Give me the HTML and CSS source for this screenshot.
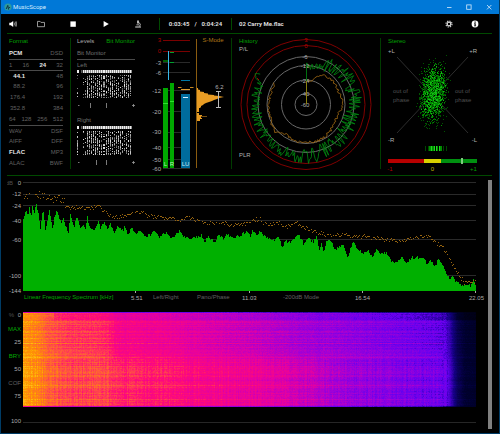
FILE: index.html
```html
<!DOCTYPE html>
<html lang="en">
<head>
<meta charset="utf-8">
<title>MusicScope</title>
<meta name="viewport" content="width=device-width, initial-scale=1">
<link rel="stylesheet" href="styles.css">
</head>
<body>
<header class="titlebar">
  <svg class="logo" viewBox="0 0 8 8" aria-hidden="true"><circle cx="4" cy="4" r="3.6" fill="#2f9a9c"/><path d="M2.2 6l1.6-3.6M3.8 2.4l.8 4.2M5 5.2l1-1.2" stroke="#0c2d3c" stroke-width=".9" fill="none"/></svg>
  <h1 class="app-name">MusicScope</h1>
  <div class="window-buttons">
    <button type="button" aria-label="Minimize"><svg viewBox="0 0 6 6"><path d="M1 3.5h4.5"/></svg></button>
    <button type="button" aria-label="Maximize"><svg viewBox="0 0 6 6"><rect x=".7" y=".9" width="4.4" height="4.4"/></svg></button>
    <button type="button" aria-label="Close"><svg viewBox="0 0 6 6"><path d="M1 1l4.4 4.4M5.4 1L1 5.4"/></svg></button>
  </div>
</header>

<main class="content">
  <div class="toolbar">
    <div class="transport">
      <button type="button" aria-label="Volume"><svg viewBox="0 0 8 8"><path d="M.3 2.8h1.6L4.2 1v6L1.9 5.2H.3z" fill="#fff"/><path d="M5.1 2.6q.9 1.4 0 2.8M6.1 1.8q1.7 2.2 0 4.4M7 1.2q1.6 2.8 0 5.6" stroke="#ccc" stroke-width=".6" fill="none"/></svg></button>
      <button type="button" aria-label="Open"><svg viewBox="0 0 8 8"><path d="M.5 6.7V1.4h2.6l.8 1h3.6v4.3z" stroke="#bbb" stroke-width=".8" fill="none"/></svg></button>
      <button type="button" aria-label="Stop"><svg viewBox="0 0 8 8"><path d="M1.4 1.4h5.4v5.4H1.4z" fill="#fff"/></svg></button>
      <button type="button" aria-label="Play"><svg viewBox="0 0 8 8"><path d="M1.6 1l5.2 3-5.2 3z" fill="#fff"/></svg></button>
      <button type="button" aria-label="Analyze"><svg viewBox="0 0 8 8"><path d="M3.2.6h1.6v3H3.2zM1.2 6.4h5.8v1H1.2zM2.4 4.4h2.8v.8H2.4z" fill="#ddd"/><path d="M5 2.4q2.4 2 .6 4" stroke="#ddd" stroke-width=".8" fill="none"/></svg></button>
    </div>
    <div class="time"><span>0:03:45</span><span>/</span><span>0:04:24</span></div>
    <div class="track">02 Carry Me.flac</div>
    <div class="tools">
      <button type="button" aria-label="Settings"><svg viewBox="0 0 8 8"><circle cx="4" cy="4" r="3" fill="none" stroke="#ccc" stroke-width="1.2" stroke-dasharray="1.3 1.056"/><circle cx="4" cy="4" r="1.8" fill="none" stroke="#ddd" stroke-width="1.2"/></svg></button>
      <button type="button" aria-label="Information"><svg viewBox="0 0 8 8"><circle cx="4" cy="4" r="3.4" fill="#fff"/><path d="M3.5 1.6h1.2v1.1H3.5zM3 3.2h1.7v2.5h.5v.6H3v-.6h.5V3.8H3z" fill="#000"/></svg></button>
    </div>
  </div>

  <div class="panels">
    <section class="panel format">
      <h2>Format</h2>
      <div class="row two"><b>PCM</b><span>DSD</span></div>
      <div class="row ruled four"><span>1</span><span>16</span><b>24</b><span>32</span></div>
      <div class="row ruled two in"><b>44.1</b><span>48</span></div>
      <div class="row two in"><span>88.2</span><span>96</span></div>
      <div class="row two in"><span>176.4</span><span>192</span></div>
      <div class="row two in"><span>352.8</span><span>384</span></div>
      <div class="row four"><span>64</span><span>128</span><span>256</span><span>512</span></div>
      <div class="row ruled two"><span>WAV</span><span>DSF</span></div>
      <div class="row two"><span>AIFF</span><span>DFF</span></div>
      <div class="row two"><b>FLAC</b><span>MP3</span></div>
      <div class="row two"><span>ALAC</span><span>BWF</span></div>
    </section>

    <section class="panel levels">
      <div class="tabs"><button type="button">Levels</button><button type="button" class="on">Bit Monitor</button></div>
      <div class="row">Bit Monitor</div>
      <div class="row ruled">Left</div>
      <canvas class="bits" width="54" height="29" data-seed="3"></canvas>
      <svg class="marks" viewBox="0 0 58 12"><path d="M1 6.5h1.5M13.5 4v5M29.5 4v5M55 6.5h3M56.5 5v3"/></svg>
      <div class="row second">Right</div>
      <canvas class="bits" width="54" height="29" data-seed="8"></canvas>
      <svg class="marks" viewBox="0 0 58 12"><path d="M1 6.5h1.5M19.5 4v5M29.5 4v5M55 6.5h3M56.5 5v3"/></svg>
    </section>

    <section class="panel meters">
      <svg viewBox="0 0 85 141" role="img" aria-label="Level meters">
        <path class="grid" d="M16 28.5h27M16 38.5h27M16 56.5h27M16 77.5h27M16 98.5h27M16 113.5h27M16 125.5h27M16 134.5h27"/>
        <path d="M16 6.5h27M16 17.5h27" stroke="#7a0000"/>
        <g class="scale end"><text x="14" y="8" class="red">3</text><text x="14" y="19" class="red">0</text><text x="14" y="31">-3</text><text x="14" y="41">-6</text><text x="14" y="59">-12</text><text x="14" y="80">-20</text><text x="14" y="100">-30</text><text x="14" y="116">-40</text><text x="14" y="128">-50</text><text x="14" y="137">-60</text></g>
        <path d="M16 54h5v80h-5zM23 49h4v85h-4z" fill="#00a800"/>
        <path d="M16 69.500h5M23 67.500h4" stroke="#30e030"/>
        <path d="M16 27h5" stroke="#006000" stroke-width="2"/>
        <path d="M23 18.500h4M23 28.500h4" stroke="#00a030"/>
        <path d="M21.500 17v29" stroke="#38b8e8"/>
        <path d="M34 60h9v74h-9z" fill="#006c9c"/>
        <path d="M36 63.500h5" stroke="#d8f0ff"/>
        <path d="M34 46.500h9" stroke="#0078a8"/>
        <path d="M31 53.500h3.500M43 53.500h3.500" stroke="#c88820"/><path d="M34 55.500h9" stroke="#e0a030"/>
        <g class="scale mid"><text x="18.500" y="132" fill="#bde8bd">L</text><text x="25" y="132" fill="#bde8bd">R</text><text x="38.500" y="132" fill="#cfe6f2">LU</text></g>
        <path d="M49.500 5v129" stroke="#8a5c10"/>
        <path d="M50 52v2h1v1.500l2 .5v1.500l4 .5v1l4 .5v1l6 .5v.5l5 .5 5 1-5 1-2 1-3 1-2 1-3 1-3 1-2 1-1 1-2 1v1l-1 1h-1v4h-2zM50 79h2v2h3v1h5v.5h-6v1.500h1v1h-2v2h-3z" fill="#e89c24"/>
        <g class="scale mid"><text x="66" y="8" class="amber">S-Mode</text><text x="72.500" y="55">6.2</text></g>
        <path d="M69 57.500h5M71.500 57v16M69 73.500h5" stroke="#bbb" fill="none"/>
      </svg>
    </section>

    <section class="panel history">
      <svg viewBox="0 0 149 141" role="img" aria-label="History">
        <g fill="none"><g stroke="#800000"><circle cx="74" cy="70.500" r="65"/><circle cx="74" cy="70.500" r="59"/></g>
        <g stroke="#686868"><circle cx="74" cy="70.500" r="48"/><circle cx="74" cy="70.500" r="39"/><circle cx="74" cy="70.500" r="24.500"/><circle cx="74" cy="70.500" r="11"/></g>
        <path id="histOrange" stroke="#a86e14" stroke-width=".8"/><path id="histGreen" stroke="#008c10" stroke-width=".8"/><path stroke="#a00000" d="M25 44l2 2"/></g>
        <g class="scale mid"><text x="74" y="8" class="red">3</text><text x="74" y="14" class="red">0</text><text x="73" y="25">-6</text><text x="73" y="34">-12</text><text x="73" y="49">-24</text><text x="73" y="62">-40</text><text x="73" y="73">-60</text></g>
        <path d="M74.500 31v30" stroke="#007010"/><path d="M74.500 47v23" stroke="#8a8010"/>
        <g class="scale"><text x="7" y="9" class="green">History</text><text x="7" y="17">P/L</text><text x="7" y="123">PLR</text></g>
      </svg>
    </section>

    <section class="panel stereo">
      <svg viewBox="0 0 111 141" role="img" aria-label="Stereo">
        <path d="M16 23l71 76M87 23l-71 76" stroke="#383838" stroke-width=".8"/>
        <path id="cloudDim" fill="#005400"/><path id="cloudMid" fill="#008c00"/><path id="cloudLit" fill="#14bc14"/>
        <g class="scale"><text x="7" y="9" class="green">Stereo</text><text x="7" y="19">+L</text><text x="7" y="108">-R</text><g class="dim"><text x="12" y="59">out of</text><text x="12" y="68">phase</text><text x="74" y="59">out of</text><text x="74" y="68">phase</text></g></g>
        <g class="scale end"><text x="96" y="19">+R</text><text x="96" y="108">-L</text></g>
        <path d="M44.500 112v5M47.500 112v5M62.500 112v5M65.500 112v5" stroke="#004800"/>
        <path d="M49 112v5M52 112v5M56 112v5M60 112v5" stroke="#008c00" stroke-width="2"/><path d="M50.500 112v5M53.500 112v5M55.500 112v5M58.500 112v5" stroke="#20d820"/>
        <path d="M7 125h36v4H7z" fill="#b80000"/><path d="M43 125h17v4H43z" fill="#d8d000"/><path d="M60 125h36v4H60z" fill="#009010"/><path d="M80 124h2v6h-2z" fill="#80c880"/>
        <g class="scale mid"><text x="9" y="137" class="red">-1</text><text x="51.500" y="137" fill="#c0b800">0</text><text x="92.500" y="137" class="green">+1</text></g>
      </svg>
    </section>
  </div>

  <div class="charts">
    <div class="plots">
      <svg class="spectrum" viewBox="0 0 469 117" role="img" aria-label="Linear frequency spectrum">
        <path class="grid" d="M16 6.500h453M16 18.500h453M16 29.500h453M16 44.500h453M16 63.500h453M16 99.500h453"/>
        <path id="spectrumFill" fill="#00b000"/>
        <path id="spectrumPeaks" stroke="#966410" fill="none"/>
        <path d="M128.500 115v2M242.500 115v2M355.500 115v2M468.500 115v2" stroke="#aaa"/>
        <g class="scale end"><text x="6" y="9" class="dim">dB</text><text x="14" y="9">0</text><text x="14" y="20">-12</text><text x="14" y="32">-24</text><text x="14" y="47">-40</text><text x="14" y="66">-60</text><text x="14" y="102">-100</text><text x="14" y="117">-144</text></g>
      </svg>
      <div class="axis">
        <button type="button" class="on">Linear Frequency Spectrum [kHz]</button><span>5.51</span><button type="button">Left/Right</button><button type="button">Pano/Phase</button><span>11.03</span><button type="button">-200dB Mode</button><span>16.54</span><span>22.05</span>
      </div>
      <div class="spectrogram">
        <div class="percent">
          <div><span class="faint">%</span> 0</div><button type="button" class="on">MAX</button><div>25</div><button type="button" class="on">BRY</button><div>50</div><button type="button">COF</button><div>75</div><div class="full">100</div>
        </div>
        <div class="heat"><canvas id="heat" width="453" height="95"></canvas></div>
      </div>
    </div>
    <div class="scrollbar"></div>
  </div>
</main>
<script src="app.js"></script>
</body>
</html>
```
FILE: styles.css
```css
* { box-sizing: border-box; }
body {
  margin: 0;
  min-height: 100vh;
  background: #000;
  color: #aaa;
  font: 6px/10px "Liberation Sans", Arial, sans-serif;
  border: 1px solid #003c66;
  border-top: 0;
  display: flex;
  flex-direction: column;
}
h1, h2 { margin: 0; font-size: inherit; font-weight: normal; }
button {
  padding: 0;
  border: 0;
  background: none;
  color: inherit;
  font: inherit;
  text-align: left;
  white-space: nowrap;
}
svg { display: block; }
canvas { display: block; }

.titlebar {
  display: flex;
  align-items: center;
  height: 14px;
  margin: 0 -1px;
  padding: 0 8px 0 4px;
  background: #0078d7;
  color: #d8ecfc;
}
.logo { width: 8px; height: 8px; }
.app-name { margin-left: 1px; font-family: Roboto, sans-serif; }
.window-buttons { display: flex; gap: 14px; margin-left: auto; }
.window-buttons svg { width: 6px; height: 6px; fill: none; stroke: #d8ecfc; stroke-width: .8; }

.content { flex: 1; display: flex; flex-direction: column; padding: 0 7px 4px 6px; }

.toolbar {
  display: flex;
  align-items: center;
  height: 20px;
  border-bottom: 1px solid #004a00;
  color: #ddd;
  font-weight: bold;
  font-family: Roboto, sans-serif;
}
.toolbar svg { width: 8px; height: 8px; }
.transport { display: flex; justify-content: space-between; width: 135px; padding-left: 2px; }
.transport button:first-child { margin-right: -5px; }
.time {
  display: flex;
  justify-content: center;
  gap: 5px;
  width: 73px;
  margin-left: 17px;
  line-height: 12px;
  border: solid #004a00;
  border-width: 0 1px;
}
.track { margin-left: 7px; }
.tools { display: flex; gap: 18px; margin-left: auto; padding-right: 13px; }

.panels {
  display: grid;
  grid-template-columns: 64fr 76fr 85fr 149fr 111fr;
  border-bottom: 1px solid #004a00;
}
.panel { min-width: 0; }
.format, .meters, .history { background: linear-gradient(#003c00, #003c00) right 4px / 1px calc(100% - 10px) no-repeat; }
.panel h2, .on, .green { color: #00a000; }

.format { padding: 2px 8px 0 2px; color: #606060; }
.format h2 { margin-bottom: 2px; }
.row { height: 11px; line-height: 11px; }
.format .row { display: flex; justify-content: space-between; }
.format .in > :first-child { width: 16px; text-align: right; }
.ruled { border-top: 1px solid #4a4a4a; }
.format b { color: #e4e4e4; }

.levels { padding: 2px 12px 0 6px; color: #707070; }
.tabs { display: flex; justify-content: space-between; margin-bottom: 2px; color: #aaa; }
.tabs button { line-height: 10px; }
.bits { width: 94%; height: auto; image-rendering: pixelated; }
.marks { width: 100%; fill: none; stroke: #999; stroke-width: .8; }
.second { margin-top: 4px; }

.grid { stroke: #2a2a2a; fill: none; }
.scale { font-size: 6px; fill: #b0b0b0; }
.end { text-anchor: end; }
.mid { text-anchor: middle; }
.scale .red { fill: #b00000; }
.scale .green { fill: #00a000; }
.scale .amber { fill: #b07818; }
.scale .dim, .scale.dim { fill: #505050; }

.charts { flex: 1; display: flex; gap: 12px; }
.plots { flex: 1; min-width: 0; }
.scrollbar { width: 4px; margin-top: 4px; background: #808080; }
.axis {
  display: grid;
  grid-template-columns: minmax(0, 107fr) minmax(0, 22fr) minmax(0, 44fr) minmax(0, 45fr) minmax(0, 41fr) minmax(0, 72fr) minmax(0, 114fr) minmax(0, 7fr);
  padding-left: 17px;
  line-height: 8px;
  color: #606060;
}
.axis span { color: #aaa; white-space: nowrap; padding-top: 1px; }
.axis button { padding-bottom: 1px; line-height: 8px; }
.axis .on, .percent .on { color: #00a800; }

.spectrogram { display: flex; gap: 2px; margin-top: 7px; }
.percent { display: flex; flex-direction: column; width: 14px; flex: none; align-items: flex-end; }
.percent > * { flex: 1; white-space: nowrap; line-height: 12px; }
.percent button { color: #606060; }
.percent .full { flex: none; padding-top: 12px; line-height: 12px; }
.faint { color: #505050; margin-right: 2px; }
.heat { flex: 1; min-width: 0; padding: 3px 0 15px; margin-bottom: 4px; border-bottom: 1px solid #262626; }
.heat canvas { width: 100%; height: auto; }
```
FILE: app.js
```js
function random(seed) {
  let s = seed * 2654435761 >>> 0;
  return () => {
    s = s + 0x6D2B79F5 >>> 0;
    let t = Math.imul(s ^ s >>> 15, 1 | s);
    t = t + Math.imul(t ^ t >>> 7, 61 | t) ^ t;
    return ((t ^ t >>> 14) >>> 0) / 4294967296;
  };
}

// Linear interpolation through a list of [x, y] points.
function at(points, x) {
  let i = 1;
  while (i < points.length - 1 && points[i][0] < x) i++;
  const [x0, y0] = points[i - 1], [x1, y1] = points[i];
  const t = Math.max(0, Math.min(1, (x - x0) / (x1 - x0)));
  return y0 + (y1 - y0) * t;
}

const setPath = (id, d) => document.getElementById(id).setAttribute('d', d);

// Bit monitor
document.querySelectorAll('.bits').forEach(canvas => {
  const r = random(+canvas.dataset.seed), c = canvas.getContext('2d');
  for (let x = 0; x < 53; x += 2) {
    if (x === 2) continue;
    c.fillStyle = x === 4 ? '#555' : '#eee';
    c.fillRect(x, 0, x ? 1.6 : 2, 3);
    const weight = x > 8 ? .35 + r() * .4 : .25;
    for (let y = 5; y < 28; y++) {
      if (x === 4 || r() > weight + .1) continue;
      const v = 70 + r() * 160 | 0;
      c.fillStyle = `rgb(${v},${v},${v})`;
      c.fillRect(x, y, 1, 1);
    }
  }
});

// History traces: [degrees clockwise, radius]
const level = [[0, 38], [20, 40], [28, 46], [45, 49], [60, 48], [90, 49], [120, 46], [150, 48], [180, 52], [210, 52], [240, 51], [270, 50], [290, 50], [304, 56]];
const spread = [[0, 4], [22, 4], [28, 9], [60, 8], [90, 7], [120, 9], [170, 8], [200, 6], [270, 5], [304, 5]];
const peak = [[0, 24], [15, 25], [25, 31], [35, 35], [50, 36], [70, 35], [90, 37], [105, 34], [120, 33], [140, 36], [160, 38], [190, 38], [215, 36], [228, 41], [250, 38], [270, 37], [285, 37], [298, 37], [303, 38]];
{
  const r = random(5);
  const trace = (points, step, noise) => {
    let d = '';
    for (let a = 0; a <= 304; a += step) {
      const rad = a * Math.PI / 180, q = at(points, a) + (r() - .5) * 2 * noise(a);
      d += (d ? 'L' : 'M') + (74 + Math.sin(rad) * q).toFixed(1) + ' ' + (70.5 - Math.cos(rad) * q).toFixed(1);
    }
    return d;
  };
  setPath('histOrange', trace(peak, 2, () => 1.3));
  setPath('histGreen', trace(level, 1.2, a => at(spread, a)));
}

// Stereo cloud
{
  const r = random(11), g = () => (r() + r() + r() - 1.5) / 1.5;
  const dots = (n, w, h) => {
    let d = '';
    for (let i = 0; i < n; i++) {
      const dy = g() * h, x = 52 + (r() + r() - 1) * w - dy * .08, y = 59 + dy;
      d += `M${Math.round(x)} ${Math.round(y)}h1v1h-1z`;
    }
    return d;
  };
  setPath('cloudDim', dots(950, 16, 40));
  setPath('cloudMid', dots(620, 13, 35));
  setPath('cloudLit', dots(170, 12, 31));
}

// Spectrum: points on a grid of three units per pixel
const curve = [[68,150],[75,115],[80,110],[84,130],[88,100],[94,125],[98,95],[104,115],[109,90],[116,120],[122,165],[129,100],[137,172],[143,140],[149,110],[158,170],[163,135],[170,112],[177,130],[185,150],[190,130],[197,155],[205,180],[211,122],[222,160],[232,127],[241,165],[250,150],[255,170],[262,130],[270,160],[283,170],[295,142],[302,165],[313,140],[322,165],[332,150],[343,178],[353,155],[370,168],[373,158],[385,180],[395,162],[410,178],[421,168],[435,185],[450,182],[465,172],[480,190],[500,175],[510,190],[525,185],[540,172],[550,188],[570,195],[590,190],[605,183],[615,203],[625,190],[648,205],[655,180],[670,195],[680,178],[700,192],[720,185],[740,172],[750,188],[760,168],[770,185],[780,172],[800,190],[825,200],[835,185],[847,220],[855,200],[875,205],[893,182],[905,195],[910,210],[925,188],[940,205],[950,190],[958,230],[965,205],[972,235],[980,195],[995,205],[1005,225],[1030,215],[1043,248],[1060,205],[1070,220],[1090,240],[1105,230],[1120,250],[1128,225],[1145,240],[1160,235],[1175,260],[1190,268],[1205,245],[1220,268],[1235,250],[1270,250],[1280,270],[1290,260],[1305,278],[1315,255],[1330,275],[1340,300],[1350,315],[1358,308],[1368,325],[1390,335],[1405,330],[1413,338],[1420,310],[1426,335]];
const maxima = [[68,72],[80,70],[95,62],[115,58],[130,65],[145,75],[170,72],[190,80],[210,100],[240,98],[270,103],[295,95],[315,112],[335,125],[360,127],[385,117],[405,115],[430,117],[460,128],[500,130],[540,136],[575,130],[600,143],[640,145],[660,143],[690,150],[710,152],[740,148],[778,132],[800,152],[840,145],[860,158],[885,143],[910,158],[940,168],[970,180],[1010,183],[1040,180],[1070,187],[1095,185],[1130,192],[1180,198],[1210,202],[1240,190],[1290,185],[1310,205],[1330,218],[1350,255],[1375,300],[1395,325],[1420,322]];
{
  const r = random(21);
  let fill = 'M16 115', dots = '';
  for (let x = 16; x < 469; x++) {
    const u = (x + 7.5) * 3;
    const y = Math.min(113, Math.round(at(curve, u) / 3 - 2 + (r() - .5) * 3));
    fill += `V${y}H${x + 1}`;
    const wide = x < 60 ? 8 : 4;
    const p = Math.round(at(maxima, u) / 3 - 2 + (r() - .5) * wide) + .5;
    if (r() < .85) dots += `M${x} ${p}h1`;
  }
  setPath('spectrumFill', fill + 'V115z');
  setPath('spectrumPeaks', dots);
}

// Spectrogram
{
  const canvas = document.getElementById('heat'), c = canvas.getContext('2d');
  const w = canvas.width, h = canvas.height, img = c.createImageData(w, h), r = random(31);
  const colors = [[0, 0, 0, 16], [.08, 0, 0, 48], [.2, 20, 0, 130], [.32, 100, 0, 240], [.45, 160, 0, 215], [.58, 225, 0, 165], [.7, 255, 10, 120], [.82, 255, 90, 60], [.93, 255, 150, 0], [1, 255, 190, 20]];
  const table = Array.from({ length: 256 }, (_, i) => [1, 2, 3].map(k => at(colors.map(s => [s[0], s[k]]), i / 255)));
  const profile = [[0, .94], [12, .92], [25, .84], [45, .79], [80, .77], [95, .70], [140, .67], [180, .62], [225, .57], [260, .53], [300, .47], [340, .42], [380, .38], [418, .34], [426, .26], [434, .13], [442, .08], [452, .07]];
  const rows = Array.from({ length: h }, (_, y) => (r() - .5) * .07 + (r() < .08 ? .05 : 0) - (y < 40 ? .02 : 0));
  const cols = Array.from({ length: w }, () => (r() - .5) * .04);
  for (let y = 0; y < h; y++) {
    for (let x = 0; x < w; x++) {
      let v = at(profile, x) + rows[y] * (x < 420 ? 1 : .3) + (r() - .5) * (x < 425 ? .06 : .02);
      const low = y > 46;
      v += cols[x] * (low ? 1.4 : .6) * (x < 425 ? 1 : 0);
      // The later part of the track is a little louder in the middle band, fading out above it.
      if (low) v += at([[60, 0], [90, .04], [260, .05], [330, 0], [400, 0], [425, .03], [440, 0]], x);
      if (!low && x > 90 && x < 300) v -= .02;
      if (y < 8 && x > 30) v -= .05;
      if (y === 0 || y === h - 1) v *= .6;
      const rgb = table[Math.max(0, Math.min(255, Math.round(v * 255)))];
      const o = (y * w + x) * 4;
      img.data[o] = rgb[0]; img.data[o + 1] = rgb[1]; img.data[o + 2] = rgb[2]; img.data[o + 3] = 255;
    }
  }
  c.putImageData(img, 0, 0);
}
```
